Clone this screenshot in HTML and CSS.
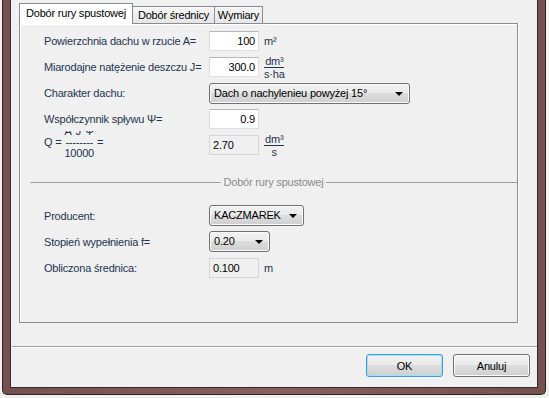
FILE: index.html
```html
<!DOCTYPE html>
<html lang="pl">
<head>
    <meta charset="UTF-8">
    <title>Dobór rury spustowej</title>
    <link rel="stylesheet" href="styles.css">
</head>
<body>
    <!-- Dialog window with brown frame -->
    <div class="window">
        <div class="client">

            <!-- Tab control -->
            <div class="tab-control">
                <div class="tab-strip">
                    <div class="tab tab-active">Dobór rury spustowej</div>
                    <div class="tab tab-second">Dobór średnicy</div>
                    <div class="tab tab-third">Wymiary</div>
                </div>

                <div class="tab-page">
                    <div class="form-rows">
                        <div class="form-row">
                            <span class="form-label">Powierzchnia dachu w rzucie A=</span>
                            <span class="text-box">100</span>
                            <span class="unit">m²</span>
                        </div>

                        <div class="form-row">
                            <span class="form-label">Miarodajne natężenie deszczu J=</span>
                            <span class="text-box">300.0</span>
                            <span class="unit-frac">
                                <span class="frac-num">dm³</span>
                                <span class="frac-den">s·ha</span>
                            </span>
                        </div>

                        <div class="form-row">
                            <span class="form-label">Charakter dachu:</span>
                            <span class="combo combo-roof">
                                Dach o nachylenieu powyżej 15°
                                <span class="combo-arrow"></span>
                            </span>
                        </div>

                        <div class="form-row">
                            <span class="form-label">Współczynnik spływu Ψ=</span>
                            <span class="text-box">0.9</span>
                        </div>

                        <div class="form-row">
                            <span class="form-label q-label">
                                <span class="q-formula">
                                    <span></span><span>A*J*Ψ</span><span></span>
                                    <span>Q =</span><span>--------</span><span>=</span>
                                    <span></span><span>10000</span><span></span>
                                </span>
                            </span>
                            <span class="text-box text-box-readonly">2.70</span>
                            <span class="unit-frac">
                                <span class="frac-num">dm³</span>
                                <span class="frac-den">s</span>
                            </span>
                        </div>
                    </div>

                    <!-- Group separator -->
                    <div class="group-title">Dobór rury spustowej</div>

                    <div class="form-rows form-rows-lower">
                        <div class="form-row">
                            <span class="form-label">Producent:</span>
                            <span class="combo combo-maker">
                                KACZMAREK
                                <span class="combo-arrow"></span>
                            </span>
                        </div>

                        <div class="form-row">
                            <span class="form-label">Stopień wypełnienia f=</span>
                            <span class="combo combo-fill">
                                0.20
                                <span class="combo-arrow"></span>
                            </span>
                        </div>

                        <div class="form-row">
                            <span class="form-label">Obliczona średnica:</span>
                            <span class="text-box text-box-readonly">0.100</span>
                            <span class="unit">m</span>
                        </div>
                    </div>
                </div>
            </div>

            <!-- Dialog buttons -->
            <div class="button-bar">
                <button class="btn btn-default">OK</button>
                <button class="btn">Anuluj</button>
            </div>
        </div>
    </div>
</body>
</html>
```

FILE: styles.css
```css
/* Page base */
html, body {
    margin: 0;
    padding: 0;
}

body {
    width: 549px;
    height: 398px;
    overflow: hidden;
    background-color: #f0f0f0;
    font-family: 'Liberation Sans', Arial, sans-serif;
    font-size: 11px;
    letter-spacing: -0.2px;
    color: #000;
}

/* Window frame */
.window {
    box-sizing: border-box;
    width: 544px;
    height: 395px;
    margin-left: 2px;
    border: 1px solid #2f2222;
    border-top: none;
    border-radius: 0 0 5px 5px;
    padding: 0 7px 6px 7px;
    background: linear-gradient(90deg, #74504f, #86605f 50%, #74504f);
}

.client {
    box-sizing: border-box;
    height: 388px;
    border: 1px solid #3a2929;
    border-top: none;
    background-color: #f0f0f0;
}

/* Tab control */
.tab-control {
    margin-left: 8px;
    padding-top: 3px;
}

.tab-strip {
    display: flex;
    align-items: flex-end;
    height: 20px;
}

.tab {
    box-sizing: border-box;
    height: 17px;
    padding-top: 2px;
    text-align: center;
    border-top: 1px solid #898c95;
    border-right: 1px solid #898c95;
    background: linear-gradient(#f6f6f6, #e6e6e6);
}

.tab-active {
    position: relative;
    z-index: 1;
    width: 114px;
    height: 21px;
    margin-bottom: -1px;
    padding-top: 3px;
    border-left: 1px solid #898c95;
    background: #fff;
}

.tab-second {
    width: 82px;
}

.tab-third {
    width: 48px;
}

.tab-page {
    box-sizing: border-box;
    width: 499px;
    height: 300px;
    border: 1px solid #898c95;
    background-color: #f0f0f0;
    box-shadow: inset 1px 1px 0 #fff, 1px 0 0 #fff;
    padding: 7px 0 0 10px;
}

/* Form rows */
.form-rows {
    display: flex;
    flex-direction: column;
    gap: 6px;
    padding-left: 14px;
}

.form-rows-lower {
    gap: 5px;
    margin-top: 17px;
}

.form-row {
    display: flex;
    align-items: center;
    height: 20px;
}

.form-rows-lower .form-row {
    height: 21px;
}

.form-label {
    width: 165px;
    flex-shrink: 0;
    color: #1d3452;
}

/* Q = A*J*Psi / 10000 label, top line clipped like the original control */
.q-label {
    height: 28px;
    overflow: hidden;
}

.q-formula {
    display: grid;
    grid-template-columns: auto auto auto;
    column-gap: 3px;
    justify-items: center;
    justify-content: start;
    line-height: 11px;
    margin-top: -5px;
}

/* Text boxes */
.text-box {
    box-sizing: border-box;
    width: 50px;
    height: 20px;
    padding: 0 3px;
    line-height: 18px;
    text-align: right;
    background-color: #fff;
    border: 1px solid #dde1e6;
    border-top-color: #b4b7bd;
}

.text-box-readonly {
    text-align: left;
    background-color: #f0f0f0;
    border-color: #d6d6d6;
}

.unit {
    margin-left: 5px;
    color: #1d3452;
}

.unit-frac {
    display: inline-flex;
    flex-direction: column;
    align-items: center;
    margin-left: 5px;
    line-height: 10px;
    color: #1d3452;
}

.frac-num {
    border-bottom: 1px solid #1d3452;
    padding: 0 1px 1px;
}

.frac-den {
    padding-top: 1px;
}

/* Drop-down lists */
.combo {
    position: relative;
    box-sizing: border-box;
    height: 21px;
    padding-left: 4px;
    line-height: 19px;
    border: 1px solid #707070;
    border-radius: 3px;
    background: linear-gradient(#f2f2f2, #ebebeb 45%, #dddddd 50%, #cfcfcf);
    box-shadow: inset 0 0 0 1px #fafafa;
}

.combo-roof {
    width: 201px;
}

.combo-maker {
    width: 95px;
}

.combo-fill {
    width: 61px;
}

.combo-arrow {
    position: absolute;
    right: 6px;
    top: 8px;
    width: 0;
    height: 0;
    border-left: 4px solid transparent;
    border-right: 4px solid transparent;
    border-top: 4px solid #000;
}

/* Group separator with centered title */
.group-title {
    display: flex;
    align-items: center;
    gap: 3px;
    height: 12px;
    margin-top: 21px;
    line-height: 12px;
    color: #8a8a8a;
}

.group-title::before,
.group-title::after {
    content: "";
    flex: 1;
    border-top: 1px solid #a0a0a0;
}

/* Bottom button bar */
.button-bar {
    display: flex;
    justify-content: flex-end;
    gap: 10px;
    margin: 23px 0 0 1px;
    padding: 7px 7px 0 0;
    border-top: 1px solid #a0a0a0;
    box-shadow: inset 0 1px 0 #fff;
}

.btn {
    box-sizing: border-box;
    width: 77px;
    height: 23px;
    padding: 0;
    font-family: 'Liberation Sans', Arial, sans-serif;
    font-size: 11px;
    letter-spacing: -0.2px;
    color: #000;
    border: 1px solid #707070;
    border-radius: 3px;
    background: linear-gradient(#f2f2f2, #ebebeb 45%, #dddddd 50%, #cfcfcf);
    box-shadow: inset 0 0 0 1px #fbfbfb;
}

.btn-default {
    border-color: #3c9ce0;
    box-shadow: inset 0 0 0 1px #9fe0fb;
}
```
